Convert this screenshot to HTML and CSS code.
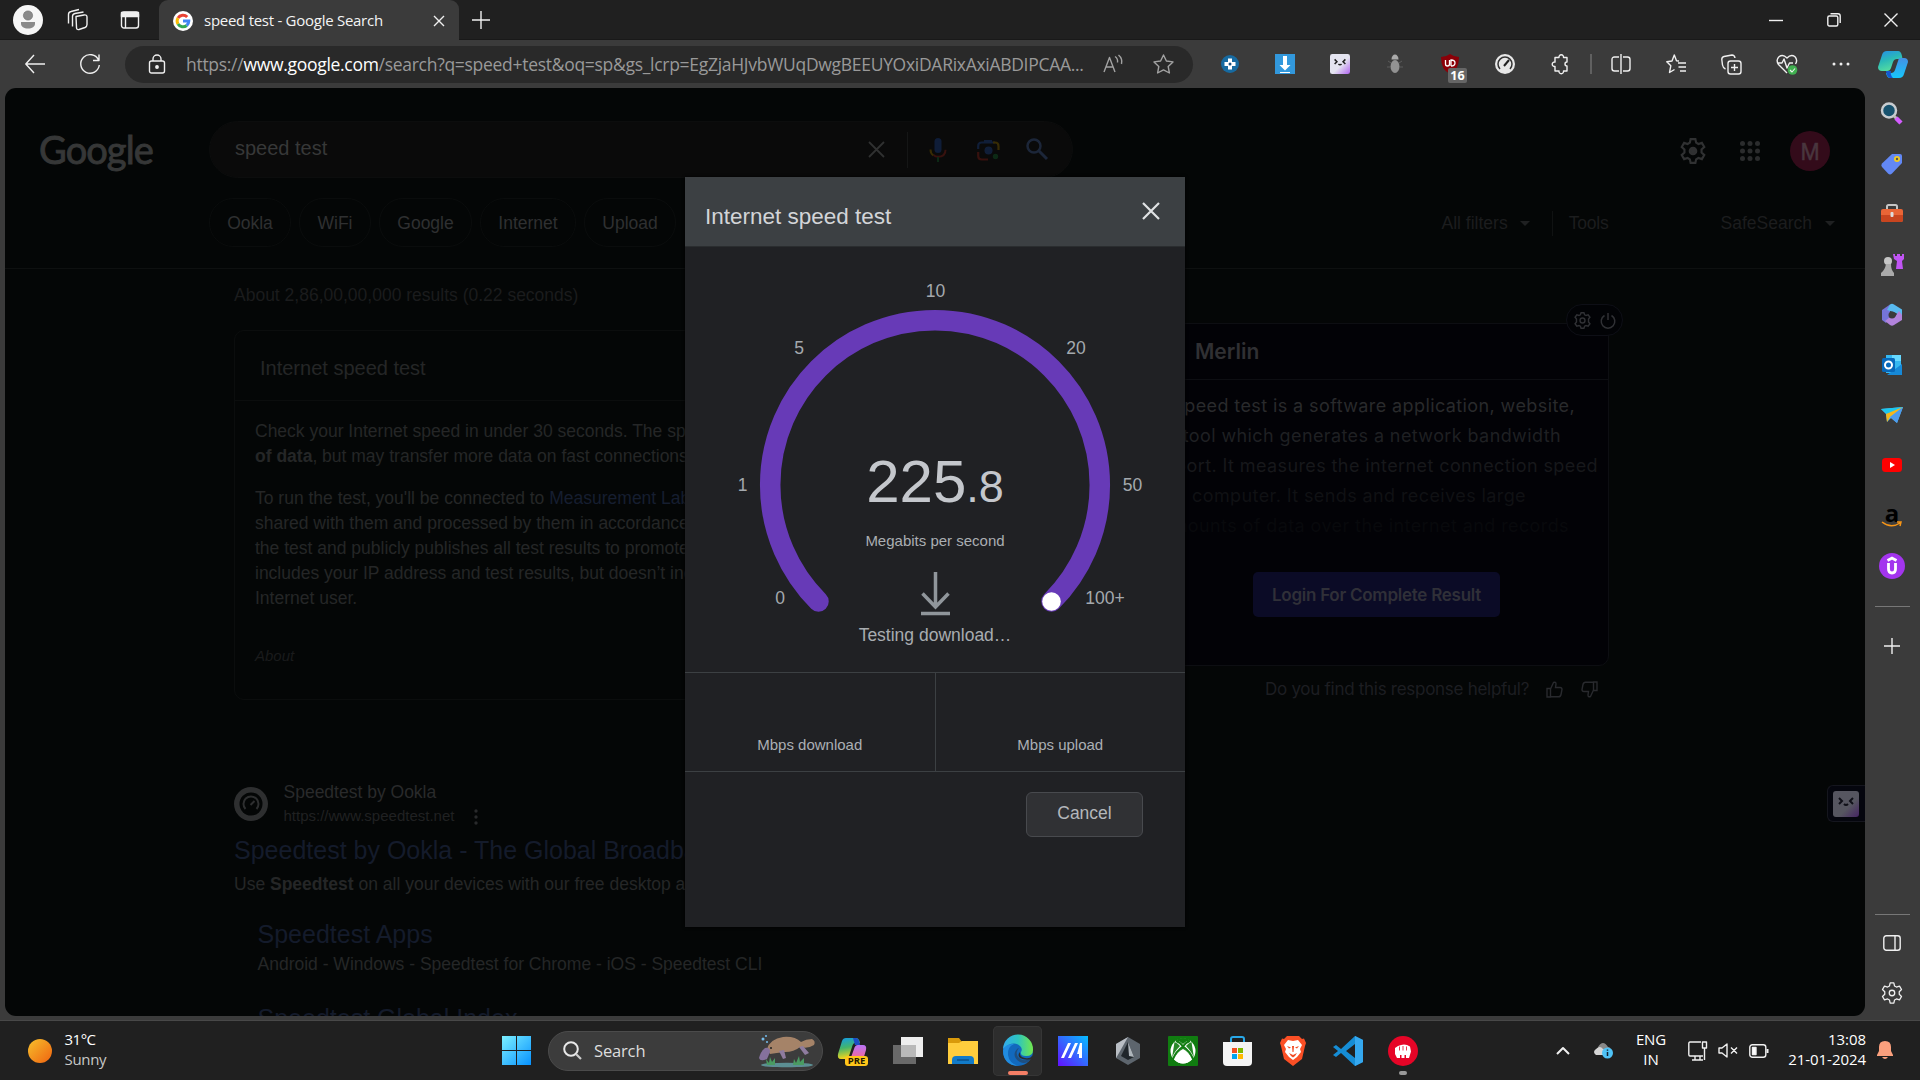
FILE: index.html
```html
<!DOCTYPE html>
<html lang="en">
<head>
<meta charset="utf-8">
<title>speed test - Google Search</title>
<link rel="stylesheet" href="styles.css">
</head>
<body>
<div class="desktop">
  <header class="titlebar">
    <div class="title-icons">
      <svg width="30" height="30" viewBox="0 0 30 30"><circle cx="15" cy="15" r="15" fill="#f6f6f6"/><circle cx="15" cy="10.5" r="4.6" fill="#8a8a8a" stroke="#666" stroke-width=".6"/><path d="M8 17h14v1.500c0 3.500-3 5-7 5s-7-1.500-7-5z" fill="#8a8a8a"/></svg>
      <svg class="line" width="24" height="24" viewBox="0 0 24 24"><path d="M10 8.500l8-1.500q3-.5 3 2v7.500q0 2-2 3l-6 2q-2.500.5-2.500-2zM6.500 18.500V8.500q0-2.500 2.500-3L17.500 4M2.500 15.500V6.500q0-2.500 2.500-3l8-2"/></svg>
      <svg class="line" width="20" height="20" viewBox="0 0 20 20"><rect x="1.500" y="2" width="17" height="16" rx="2.500"/><path d="M1.500 2.500h17v4h-17z" fill="#f0f0f0"/><path d="M5.500 6v12"/></svg>
    </div>
    <div class="tab">
      <svg width="20" height="20" viewBox="0 0 20 20"><circle cx="10" cy="10" r="10" fill="#fff"/><g fill="none" stroke-width="3"><path d="M14.200 6A5.800 5.800 0 0 0 5 7" stroke="#ea4335"/><path d="M5 7a5.800 5.800 0 0 0 0 6" stroke="#fbbc05"/><path d="M5 13a5.800 5.800 0 0 0 8.700 1.500" stroke="#34a853"/><path d="M13.700 14.500A5.800 5.800 0 0 0 15.800 10H10" stroke="#4285f4"/></g></svg>
      <span class="tab-title">speed test - Google Search</span>
      <svg class="line" width="12" height="12" viewBox="0 0 12 12"><path d="M1 1l10 10M11 1L1 11"/></svg>
    </div>
    <svg class="line new-tab" width="18" height="18" viewBox="0 0 18 18"><path d="M9 0v18M0 9h18"/></svg>
    <div class="window-controls">
      <svg class="line" width="14" height="14" viewBox="0 0 14 14"><path d="M0 7.500h14"/></svg>
      <svg class="line" width="14" height="14" viewBox="0 0 14 14"><rect x=".8" y="3" width="10" height="10" rx="1.500"/><path d="M3.500.8H11q2.200 0 2.200 2.200v7"/></svg>
      <svg class="line" width="14" height="14" viewBox="0 0 14 14"><path d="M.5.5l13 13M13.500.5l-13 13"/></svg>
    </div>
  </header>

  <nav class="toolbar">
    <div class="nav-buttons">
      <svg class="line" width="20" height="20" viewBox="0 0 20 20"><path d="M9 1L.8 10 9 19M1 10h19"/></svg>
      <svg class="line" width="22" height="22" viewBox="0 0 22 22"><path d="M19.500 7A9.300 9.300 0 1 0 20.300 12M20 1.500v6h-6"/></svg>
    </div>
    <div class="address">
      <svg class="line lock" width="18" height="20" viewBox="0 0 18 20"><rect x="1.500" y="7" width="15" height="12" rx="2"/><path d="M5 7V5a4 4 0 0 1 8 0v2"/><circle cx="9" cy="13" r="1.200" fill="#eee"/></svg>
      <span class="url">https://<b>www.google.com</b>/search?q=speed+test&amp;oq=sp&amp;gs_lcrp=EgZjaHJvbWUqDwgBEEUYOxiDARixAxiABDIPCAA...</span>
      <svg class="line muted" width="20" height="18" viewBox="0 0 20 18"><path d="M1 17L6.500 2.500 12 17M3 12h7M12 1.500a6 6 0 0 1 2.500 6M15.500 0A9 9 0 0 1 18.500 9"/></svg>
      <svg class="line muted star" width="21" height="20" viewBox="0 0 21 20"><path d="M10.500 1l2.900 6 6.600.9-4.800 4.600 1.200 6.500-5.900-3.100L4.600 19l1.200-6.500L1 7.900 7.600 7z"/></svg>
    </div>
    <div class="tools">
      <span><svg width="18" height="18" viewBox="0 0 18 18"><circle cx="9" cy="9" r="9" fill="#176aa0"/><path d="M7 3.500h4V7h3.500v4H11v3.500H7V11H3.500V7H7z" fill="#fff"/><circle cx="9" cy="9" r="1.500" fill="#174f80"/></svg></span>
      <span><svg width="20" height="20" viewBox="0 0 20 20"><path d="M0 0h20v20H0z" fill="#3298dc"/><path d="M8 2h4v9h3.500L10 16.500 4.500 11H8zM5 18h10v1H5z" fill="#fff"/></svg></span>
      <span><svg width="20" height="20" viewBox="0 0 26 26"><defs><linearGradient id="mer" x1="0" y1="0" x2="1" y2="1"><stop offset=".55" stop-color="#e4e4f0"/><stop offset="1" stop-color="#b064f0"/></linearGradient></defs><rect width="26" height="26" rx="3" fill="url(#mer)"/><path d="M6 7l3 3-3 3M20 7l-3 3 3 3M11 13q2 2 4 0" fill="none" stroke="#222" stroke-width="2"/></svg></span>
      <span><svg width="16" height="20" viewBox="0 0 16 20"><path d="M4.500 5.500a3.500 5 0 0 1 7 0z" fill="#aaa"/><ellipse cx="8" cy="12.500" rx="4.500" ry="6.500" fill="#929292"/><path d="M1 7l3 2M15 7l-3 2M0 13h3M16 13h-3" stroke="#5c5c5c"/></svg></span>
      <span class="badged"><svg width="18" height="20" viewBox="0 0 18 20"><path d="M9 0q4 3 9 3 0 13-9 17Q0 16 0 3q5 0 9-3z" fill="#8b0008"/><path d="M4.500 6v4q0 2 2 2t2-2V6M10 12V6q4 0 4 3t-4 3" fill="none" stroke="#fff" stroke-width="1.300"/></svg><i class="badge">16</i></span>
      <span><svg width="20" height="20" viewBox="0 0 20 20"><circle cx="10" cy="10" r="10" fill="#e8e8e8"/><path d="M5 15a7 7 0 1 1 10 0" fill="none" stroke="#333" stroke-width="1.500"/><path d="M9 12l5-6" stroke="#222" stroke-width="2"/></svg></span>
      <span><svg class="line" width="20" height="20" viewBox="0 0 20 20"><path d="M5 3.500h4a2.300 2.300 0 1 1 4.500 0h3.500v4.500a2 2 0 1 0 0 4V17h-3.500a2.300 2.300 0 1 1-4.500 0H5v-4.500a2.300 2.300 0 1 1 0-4.500z"/></svg></span>
    </div>
    <div class="tools browser-tools">
      <span class="split"><svg class="line" width="20" height="20" viewBox="0 0 20 20"><path d="M8 3H3.500Q1 3 1 5.500v9Q1 17 3.500 17H8M12 3h4.500Q19 3 19 5.500v9q0 2.500-2.500 2.500H12M10 0v20"/></svg></span>
      <span><svg class="line" width="21" height="20" viewBox="0 0 21 20"><path d="M13 7L10.500 6.800 8.300 1 6 7 0.800 7.800l4 4L3.500 18.500l5-3M12 9h8M12.500 13H20M14 17h6"/></svg></span>
      <span><svg class="line" width="21" height="21" viewBox="0 0 21 21"><rect x="7" y="7" width="13" height="13" rx="2.500"/><path d="M13.500 10v7M10 13.500h7M4.500 15Q2 14 1.500 11L.8 5.500Q.8 3 3 2.500L11 1q2.500 0 3 3"/></svg></span>
      <span><svg class="line" width="22" height="21" viewBox="0 0 22 21"><path d="M11 19L2.500 10.500Q-.5 6 3 2.700q4-3 8 1.300 4-4.300 8-1.300 3 3.300.5 7.300M1 9h5l2-4 3 9 2.500-5H17"/><circle cx="16.500" cy="16" r="4.800" fill="#40b050" stroke="none"/><path d="M14 16l2 2 3-3.500" stroke-width="1.100"/></svg></span>
      <span class="menu"><svg width="18" height="4" viewBox="0 0 18 4"><g fill="#eee"><circle cx="2" cy="2" r="1.500"/><circle cx="9" cy="2" r="1.500"/><circle cx="16" cy="2" r="1.500"/></g></svg></span>
      <span class="assistant"><svg width="30" height="27" viewBox="0 0 30 27"><defs><linearGradient id="cpA" x1="0" y1="0" x2=".4" y2="1"><stop stop-color="#268de9"/><stop offset=".5" stop-color="#2ab8b8"/><stop offset="1" stop-color="#55dda0"/></linearGradient><linearGradient id="cpB" x1="0" y1="0" x2="0" y2="1"><stop stop-color="#4490e5"/><stop offset="1" stop-color="#16c7fb"/></linearGradient></defs><path d="M9 0h11q3 0 4 5l.5 3H19q-3 0-4 3l-2 6q-1 3-4 3H4q-4 0-4-4L4 4q1-4 5-4z" fill="url(#cpA)"/><path d="M21 7h5q4 0 4 4l-4 12q-1 4-5 4H12q-3 0-4-5h5q3 0 4-3z" fill="url(#cpB)"/><path d="M8 20h5q-1 4 2 7h-3q-3 0-4-7z" fill="#1558d0"/></svg></span>
    </div>
  </nav>

  <div class="browser-body">
    <main class="page">
      <div class="page-head">
        <div class="head-row">
          <div class="logo">Google</div>
          <div class="search">
            <span class="query">speed test</span>
            <svg width="17" height="17" viewBox="0 0 17 17"><path d="M1 1l15 15M16 1L1 16" stroke="#303131" stroke-width="1.800"/></svg>
            <i class="search-sep"></i>
            <svg width="18" height="24" viewBox="0 0 18 24"><rect x="5.500" width="7" height="15" rx="3.500" fill="#0f1d38"/><path d="M1.500 11.500q0 4 3 6" stroke="#382c04" stroke-width="2" fill="none"/><path d="M4.500 17q2 1.800 4.500 1.800 7.500 0 7.500-7" stroke="#37110e" stroke-width="2" fill="none"/><path d="M9 19v5" stroke="#0c2915" stroke-width="2"/></svg>
            <svg class="lens" width="23" height="22" viewBox="0 0 23 22"><g fill="none" stroke-width="2.200"><path d="M1.200 10V7q0-3.500 3.500-3.500H18" stroke="#101e38"/><path d="M7 2.500h8" stroke="#101e38" stroke-width="3"/><path d="M16 3.500h2q3.500 0 3.500 3.500v4" stroke="#382c04"/><path d="M1.200 13v4q0 3.500 3.500 3.500H11" stroke="#37110e"/></g><circle cx="11.500" cy="11.500" r="4" fill="#101e38"/><circle cx="18.500" cy="17.500" r="2.700" fill="#0c2915"/></svg>
            <svg class="find" width="22" height="22" viewBox="0 0 22 22"><circle cx="8" cy="8" r="6.500" fill="none" stroke="#1c2639" stroke-width="2.500"/><path d="M13 13l8 8" stroke="#1c2639" stroke-width="3"/></svg>
          </div>
          <div class="account">
            <svg width="26" height="26" viewBox="0 0 24 24" fill="none" stroke="#303132" stroke-width="2"><path d="M9.800 1h4.400l.7 3.300 2.100 1.200 3.200-1 2.200 3.800-2.500 2.300v2.800l2.500 2.300-2.200 3.800-3.200-1-2.100 1.200-.7 3.300H9.800l-.7-3.300L7 18.500l-3.200 1-2.200-3.800 2.500-2.300v-2.800L1.600 8.300l2.200-3.800 3.200 1 2.100-1.200z"/><circle cx="12" cy="12" r="3" fill="#303132"/></svg>
            <svg width="20" height="20" viewBox="0 0 20 20" fill="#2b2c2d"><circle cx="2.500" cy="2.500" r="2.500"/><circle cx="10" cy="2.500" r="2.500"/><circle cx="17.500" cy="2.500" r="2.500"/><circle cx="2.500" cy="10" r="2.500"/><circle cx="10" cy="10" r="2.500"/><circle cx="17.500" cy="10" r="2.500"/><circle cx="2.500" cy="17.500" r="2.500"/><circle cx="10" cy="17.500" r="2.500"/><circle cx="17.500" cy="17.500" r="2.500"/></svg>
            <span class="avatar">M</span>
          </div>
        </div>
        <div class="chip-row">
          <span class="chip chip-ookla">Ookla</span><span class="chip chip-wifi">WiFi</span><span class="chip chip-google">Google</span><span class="chip chip-internet">Internet</span><span class="chip chip-upload">Upload</span>
          <div class="filters"><span>All filters</span><i class="caret"></i><span class="filter-tools">Tools</span><span class="safe">SafeSearch</span><i class="caret"></i></div>
        </div>
      </div>
      <div class="columns">
        <section class="results">
          <p class="stats">About 2,86,00,00,000 results (0.22 seconds)</p>
          <article class="card">
            <h2>Internet speed test</h2>
            <div class="card-body">
              <p>Check your Internet speed in under 30 seconds. The speed<br><b>of data</b>, but may transfer more data on fast connections.</p>
              <p>To run the test, you'll be connected to <a>Measurement Lab</a><br>shared with them and processed by them in accordance<br>the test and publicly publishes all test results to promote<br>includes your IP address and test results, but doesn’t include<br>Internet user.</p>
              <em>About</em>
            </div>
          </article>
          <article class="result">
            <div class="site">
              <svg width="34" height="34" viewBox="0 0 34 34"><circle cx="17" cy="17" r="17" fill="#2e2f30"/><circle cx="17" cy="17" r="11.500" fill="#040606"/><path d="M11.500 22a7.500 7.500 0 1 1 11 0" fill="none" stroke="#2e2f30" stroke-width="2"/><path d="M16.500 18l4-4" stroke="#2e2f30" stroke-width="2"/></svg>
              <div class="site-text"><span>Speedtest by Ookla</span><small>https://www.speedtest.net</small></div>
              <svg class="more" width="4" height="16" viewBox="0 0 4 16" fill="#292a2b"><circle cx="2" cy="2" r="1.700"/><circle cx="2" cy="8" r="1.700"/><circle cx="2" cy="14" r="1.700"/></svg>
            </div>
            <h3>Speedtest by Ookla - The Global Broadband</h3>
            <p>Use <b>Speedtest</b> on all your devices with our free desktop and</p>
            <div class="sublinks"><h3>Speedtest Apps</h3><p>Android - Windows - Speedtest for Chrome - iOS - Speedtest CLI</p><h3 class="next">Speedtest Global Index</h3></div>
          </article>
        </section>
        <aside class="merlin">
          <div class="merlin-card">
            <h4>Merlin</h4>
            <div class="answer">
              <p class="a1">speed test is a software application, website,</p>
              <p class="a2">tool which generates a network bandwidth</p>
              <p class="a3">report. It measures the internet connection speed</p>
              <p class="a4">a computer. It sends and receives large</p>
              <p class="a5">amounts of data over the internet and records</p>
            </div>
            <div class="login">Login For Complete Result</div>
            <div class="pill">
              <svg width="17" height="17" viewBox="0 0 24 24" fill="none" stroke="#303135" stroke-width="2"><path d="M10 1h4l1 3 2 1 3-1 2.500 3.500-2 2.500v4l2 2.500L20 20l-3-1-2 1-1 3h-4l-1-3-2-1-3 1-2.500-3.500 2-2.500v-4l-2-2.500L4 4l3 1 2-1z"/><circle cx="12" cy="12" r="3.500"/></svg>
              <svg width="16" height="17" viewBox="0 0 16 17" fill="none" stroke="#303135" stroke-width="1.500"><path d="M8 1v7M4.500 3.500a6.800 6.800 0 1 0 7 0"/></svg>
            </div>
          </div>
          <div class="helpful"><span>Do you find this response helpful?</span>
            <svg width="17" height="17" viewBox="0 0 17 17"><path d="M1 7.500h3.500V16H1zM4.500 8l3-6.500q2.500-1 2.500 1.500l-.5 3.500H14q2 0 2 2l-1 5q-.5 2.300-2.500 2.300h-8"/></svg>
            <svg class="down" width="17" height="17" viewBox="0 0 17 17"><path d="M1 7.500h3.500V16H1zM4.500 8l3-6.500q2.500-1 2.500 1.500l-.5 3.500H14q2 0 2 2l-1 5q-.5 2.300-2.500 2.300h-8"/></svg>
          </div>
        </aside>
      </div>
      <div class="side-tab"><svg width="26" height="26" viewBox="0 0 26 26"><defs><linearGradient id="merDim" x1="0" y1="0" x2="1" y2="1"><stop offset=".6" stop-color="#565660"/><stop offset="1" stop-color="#452463"/></linearGradient></defs><rect width="26" height="26" rx="3" fill="url(#merDim)"/><path d="M6 7l3 3-3 3M20 7l-3 3 3 3M11 13q2 2 4 0" fill="none" stroke="#101018" stroke-width="2"/></svg></div>

      <section class="dialog">
        <div class="dialog-head"><h1>Internet speed test</h1><svg width="18" height="18" viewBox="0 0 18 18"><path d="M1 1l16 16M17 1L1 17" stroke="#e0e2e4" stroke-width="2.200"/></svg></div>
        <div class="meter">
          <svg class="gauge" width="500" height="425" viewBox="685 247 500 425"><path d="M818.500 601.500A164.800 164.800 0 1 1 1051.500 601.500" fill="none" stroke="#673ab7" stroke-width="20.500" stroke-linecap="round"/><circle cx="1051.500" cy="601.500" r="9.300" fill="#fff"/>
            <g class="ticks"><text x="935.500" y="297">10</text><text x="799" y="354">5</text><text x="1076" y="354">20</text><text x="742.500" y="490.500">1</text><text x="1132.500" y="490.500">50</text><text x="780" y="604">0</text><text x="1105" y="604">100+</text></g>
            <path d="M935.500 572v34M922.500 593.500l13 13.500 13-13.500M921 613.500h29" fill="none" stroke="#90969b" stroke-width="3.500"/></svg>
          <div class="reading"><div class="speed">225<small>.8</small></div><div class="unit">Megabits per second</div><div class="phase">Testing download…</div></div>
        </div>
        <div class="totals"><span>Mbps download</span><span>Mbps upload</span></div>
        <div class="actions"><span class="cancel">Cancel</span></div>
      </section>
    </main>

    <aside class="sidebar">
      <div class="apps">
        <span><svg width="24" height="24" viewBox="0 0 24 24"><circle cx="9" cy="8.500" r="7" fill="#17526e" stroke="#c8ccd0" stroke-width="2.500"/><path d="M14 14l3 3" stroke="#bbb" stroke-width="3"/><path d="M16 16l5 5" stroke="#d45cff" stroke-width="4.500"/></svg></span>
        <span><svg width="24" height="24" viewBox="0 0 24 24"><path d="M12 2h8q2 0 2 2v7L12 21.500q-2 2-4 0L2 15q-1.500-2 0-3.500z" fill="#6288f5"/><circle cx="17" cy="7" r="3" fill="#f2cc22"/><circle cx="17" cy="7" r="1.200" fill="#555"/></svg></span>
        <span><svg width="24" height="24" viewBox="0 0 24 24"><path d="M7 7V4.500Q7 3 8.500 3h7Q17 3 17 4.500V7" fill="none" stroke="#c5c5c5" stroke-width="2"/><rect x="1" y="7" width="22" height="13" rx="2" fill="#e96536"/><path d="M1 13h22v5q0 2-2 2H3q-2 0-2-2z" fill="#c8451f"/><rect x="10.500" y="10" width="3" height="5" rx="1" fill="#ddd"/></svg></span>
        <span><svg width="24" height="24" viewBox="0 0 24 24"><path d="M13 1h2v2h2V1h3v2h2V1h2v5l-2 2 1 8h-7l1-8-3-2z" fill="#c155f4"/><circle cx="8" cy="8" r="4" fill="#c5c5c5"/><path d="M6 11h5q0 6 3 9v3H1v-3q4-3 5-9z" fill="#aaa"/></svg></span>
        <span><svg width="24" height="24" viewBox="0 0 24 24"><path d="M2 7L10 1.500V15l-4 5-4-3z" fill="#7574d9"/><path d="M10 1.500q2-1.500 4 0l8 5v7L15 9.500 7 7z" fill="#58b9ef"/><path d="M22 12v5l-8 5q-2 1.500-4 0l-5-4 5-4h5l4-6z" fill="#b283dc"/><circle cx="12" cy="12" r="3.500" fill="#3b3b3b"/></svg></span>
        <span><svg width="24" height="24" viewBox="0 0 24 24"><path d="M6 2h15v18H6z" fill="#35b8f1"/><path d="M12 2h9v6h-9z" fill="#66d9ff"/><path d="M22 11v11H7z" fill="#1689d8"/><rect x="2" y="5" width="13" height="14" rx="1.500" fill="#0868ba"/><circle cx="8.500" cy="12" r="3.500" fill="none" stroke="#fff" stroke-width="2"/></svg></span>
        <span><svg width="24" height="24" viewBox="0 0 24 24"><path d="M1 6l22-2-6 16-6-5-4 4-1-8z" fill="#51b9f2"/><path d="M1 6l22-2L8 12z" fill="#1cc7ee"/><path d="M23 4L6 11l1 8 3-5z" fill="#f6b719"/><path d="M23 4L10 14l7 6z" fill="#4d9bed"/></svg></span>
        <span><svg width="22" height="24" viewBox="0 0 22 24"><rect x="1" y="5" width="20" height="14" rx="3.500" fill="#f00"/><path d="M9 9l5 3-5 3z" fill="#fff"/></svg></span>
        <span class="amazon">a<svg width="22" height="7" viewBox="0 0 22 7"><path d="M1 1q9 7 18 1M16 1l4 0-1 4" fill="none" stroke="#f79516" stroke-width="1.500"/></svg></span>
        <span><svg width="26" height="26" viewBox="0 0 26 26"><circle cx="13" cy="13" r="13" fill="#a335ee"/><path d="M8.500 7.500L13 5l4.500 2.500M9.500 10v6q0 4 3.500 4t3.500-4v-6" fill="none" stroke="#fff" stroke-width="2.800"/></svg></span>
      </div>
      <i class="rule"></i>
      <svg class="line add" width="16" height="16" viewBox="0 0 16 16"><path d="M8 0v16M0 8h16"/></svg>
      <i class="rule low"></i>
      <svg class="line panel" width="18" height="16" viewBox="0 0 18 16"><rect x=".8" y=".8" width="16.400" height="14.400" rx="2.500"/><path d="M12 1v14"/></svg>
      <svg class="line gear" width="22" height="22" viewBox="0 0 24 24"><path d="M10 1h4l.8 3.400 2 1.100 3.400-1 2.200 3.700-2.500 2.500v2.600l2.500 2.500-2.200 3.700-3.400-1-2 1.100L14 23h-4l-.8-3.400-2-1.100-3.400 1-2.200-3.700 2.500-2.500v-2.600L1.600 8.200l2.200-3.700 3.400 1 2-1.100z"/><circle cx="12" cy="12" r="3"/></svg>
    </aside>
  </div>

  <footer class="taskbar">
    <div class="weather"><i class="sun"></i><div><b>31°C</b><span>Sunny</span></div></div>
    <svg class="start" width="29" height="29" viewBox="0 0 29 29"><defs><linearGradient id="win" x1="0" y1="0" x2="1" y2="1"><stop stop-color="#7cf0ff"/><stop offset="1" stop-color="#0792ff"/></linearGradient></defs><path d="M0 0h14v14H0zM15 0h14v14H15zM0 15h14v14H0zM15 15h14v14H15z" fill="url(#win)"/></svg>
    <div class="task-search">
      <svg width="19" height="19" viewBox="0 0 19 19"><circle cx="8" cy="8" r="6.800" fill="none" stroke="#e8e8e8" stroke-width="2"/><path d="M13 13l5 5" stroke="#ccc" stroke-width="2.200"/></svg>
      <span>Search</span>
      <svg width="56" height="34" viewBox="0 0 56 34"><ellipse cx="28" cy="31" rx="26" ry="2.300" fill="#5c8f93"/><path d="M8 31l-1-6 3 4 1-6 2 5 3-4 0 7zM34 31l1-6 2 4 3-7 1 6 4-4 0 7z" fill="#4a9b62"/><path d="M8 15q3-10 16-12 12-1 18 5 5-3 11-3 4 2 2 6-6 4-14 2-6 5-15 5-9 1-15 2z" fill="#a58368"/><path d="M6 14q5-1 5 4l-3 7q-7 3-8-1 2-7 6-10z" fill="#85719d"/><path d="M20 17l4 8 3-1-2-8zM40 13l6 8 4-2-6-7z" fill="#8f7c9f"/><circle cx="12" cy="14" r="1" fill="#222"/><g fill="#74bcec"><circle cx="4" cy="5" r="1.500"/><circle cx="7" cy="2" r="1"/><circle cx="8" cy="8" r="1"/></g></svg>
    </div>
    <div class="task-apps">
      <span class="copilot"><svg width="30" height="30" viewBox="0 0 30 30"><defs><linearGradient id="cpC" x1="0" y1="0" x2=".2" y2="1"><stop stop-color="#119bea"/><stop offset=".5" stop-color="#43b56c"/><stop offset="1" stop-color="#f2d51c"/></linearGradient><linearGradient id="cpD" x1="0" y1="0" x2="0" y2="1"><stop stop-color="#b873f7"/><stop offset="1" stop-color="#fb668e"/></linearGradient></defs><path d="M8 2h10q3 0 4 5h-5q-2 0-3 4l-3 9q-1 3-4 3H3q-4 0-3-5L4 5q1-3 4-3z" fill="url(#cpC)"/><path d="M18 2q3 0 4 7h-5l-2-7z" fill="#1c4dc5"/><path d="M20 9h5q4 0 3 5l-3 10H12l4-11q1-4 4-4z" fill="url(#cpD)"/></svg><i class="pre">PRE</i></span>
      <span><svg width="30" height="30" viewBox="0 0 30 30"><path d="M8 1h22v20H8z" fill="#eee"/><path d="M0 9h23v19H0z" fill="#777" fill-opacity=".85"/><path d="M8 9h15v12H8z" fill="#b9b9b9"/></svg></span>
      <span><svg width="30" height="30" viewBox="0 0 30 30"><path d="M0 2h11l3 4v4H0z" fill="#d99a0b"/><path d="M0 7h11l3-2h16v23H0z" fill="#ffcd3d"/><path d="M4 28v-4q0-4 4-4h14q4 0 4 4v4z" fill="#127bc9"/><path d="M9 24h12" stroke="#0b518b" stroke-width="1.500"/></svg></span>
      <span class="active"><svg width="30" height="30" viewBox="0 0 30 30"><defs><linearGradient id="edA"><stop stop-color="#32a9ed"/><stop offset=".5" stop-color="#2dc5bf"/><stop offset="1" stop-color="#72e84c"/></linearGradient></defs><circle cx="15" cy="15" r="15" fill="#1269bd"/><path d="M0 13A15 15 0 0 1 30 14q0 6-7 6-6 0-5-4 2-3-1-6-7-6-17 3z" fill="url(#edA)"/><path d="M0 14q3-7 11-6-7 3-6 11 1 8 10 11Q0 29 0 14z" fill="#218ce0"/><path d="M16 12q-4 4-1 9 4 5 13 2-5 6-11 3-7-4-5-10 1-3 4-4z" fill="#1f4f80"/><path d="M17 16q-1 5 5 6 5 1 7-2l1 3q-8 2-13-1-3-3 0-6z" fill="#2d2d2d"/></svg></span>
      <span><svg width="30" height="30" viewBox="0 0 30 30"><defs><linearGradient id="ma" x1="0" y1="1" x2="1" y2="0"><stop stop-color="#6210ff"/><stop offset=".5" stop-color="#3467ff"/><stop offset="1" stop-color="#05bfff"/></linearGradient></defs><path d="M0 0h30v30H0z" fill="url(#ma)"/><path d="M3 22L10 7h3L6 22zM10 22l7-15h3l-7 15zM18 22l4-15h2v15h-3v-4h-2z" fill="#fff"/></svg></span>
      <span><svg width="28" height="30" viewBox="0 0 28 30"><path d="M14 1l12 7v14l-12 7-12-7V8z" fill="#5d656d"/><path d="M14 1L5 17l-3 5V8z" fill="#b9bec4"/><path d="M14 6l6 15-6 3-7-4z" fill="#20262b"/><path d="M14 6l6 15-5-1z" fill="#aeb5bb"/></svg></span>
      <span><svg width="30" height="30" viewBox="0 0 30 30"><rect width="30" height="30" rx="1" fill="#107c10"/><circle cx="15" cy="15" r="12.500" fill="#fff"/><path d="M7 5q4-1 8 3 4-4 8-3-3-3-8-3T7 5z" fill="#107c10"/><path d="M5 25Q8 16 15 11q7 5 10 14-4-7-10-10Q9 18 5 25zM6.500 6q3 1 5.500 4Q6 16 4 22M23.500 6q-3 1-5.500 4 6 6 8 12" fill="#107c10" fill-opacity=".9"/><path d="M6 23q3-7 9-10 6 3 9 10-4 4.500-9 4.500T6 23z" fill="#fff"/><path d="M4.500 24Q8 15 15 10.500 22 15 25.500 24M8 5q4 1 7 5.500Q18 6 22 5" fill="none" stroke="#107c10" stroke-width="2"/></svg></span>
      <span><svg width="29" height="30" viewBox="0 0 29 30"><path d="M8 8V3q0-2 2-2h9q2 0 2 2v5" fill="none" stroke="#28a8e8" stroke-width="2"/><path d="M0 6h29v20q0 4-4 4H4q-4 0-4-4z" fill="#f4f4f4"/><path d="M9 12h5v5H9z" fill="#f25022"/><path d="M15 12h5v5h-5z" fill="#7fba00"/><path d="M9 18h5v5H9z" fill="#00a4ef"/><path d="M15 18h5v5h-5z" fill="#ffb900"/></svg></span>
      <span><svg width="26" height="30" viewBox="0 0 26 30"><path d="M7 0h12l3 3 2-.5L26 7l-1 3-3 13-9 7-9-7L1 10 0 7l2-4.500L4 3z" fill="#fb4f25"/><path d="M8 4l5 1 5-1 4 5-2 4 1 3-4 5-4 3-4-3-4-5 1-3-2-4z" fill="#fff"/><path d="M7 10l4 1.500-2 1zM19 10l-4 1.500 2 1zM9 17l4 2 4-2-2 3-2 1.500L11 20zM12 10h2l-.5 6h-1z" fill="#f14b24"/></svg></span>
      <span><svg width="30" height="30" viewBox="0 0 30 30"><path d="M22 0l8 4v22l-8 4L8 17l-5 4-3-2 5-4-5-4 3-2 5 4zM22 8l-9 7 9 7z" fill="#168dd5" fill-rule="evenodd"/><path d="M22 0l8 4v22l-8 4z" fill="#35a8ef"/></svg></span>
      <span class="running"><svg width="30" height="30" viewBox="0 0 30 30"><circle cx="15" cy="15" r="15" fill="#e60527"/><path d="M7 12l3-2 3-1 3-.5 3 .5 3 1.500 1 5-2 6.500h-3v-3h-1.500v3h-3v-3H12v3H9L7 18z" fill="#fff"/><path d="M11.500 10.500v4M15 10v4.500M18.500 10.500v4" stroke="#e60527" stroke-width=".8"/></svg></span>
    </div>
    <div class="tray">
      <svg class="line chev" width="14" height="9" viewBox="0 0 14 9"><path d="M1 8l6-6 6 6" stroke-width="2"/></svg>
      <svg class="cloud" width="20" height="17" viewBox="0 0 20 17"><path d="M5 5q5-8 10 0 3 0 3 5H6z" fill="#888"/><path d="M3 13q-4-3 0-6 4-4 7 0 3 0 3 6z" fill="#d5d5d5"/><circle cx="14.500" cy="11" r="5.500" fill="#4fc3f7"/><path d="M14.500 10v4M14.500 7.500v1.300" stroke="#123" stroke-width="1.500"/></svg>
      <div class="lang">ENG<br>IN</div>
      <svg class="line" width="20" height="20" viewBox="0 0 20 20"><path d="M13 1H2Q.8 1 .8 2.500v11Q.8 15 2 15h13M4 19h11M7 15v4M12 15v4M14.500 1h4v6h-4zM16.500 7v12"/></svg>
      <svg class="line mute" width="20" height="15" viewBox="0 0 20 15"><path d="M1 5h3l5-4v13l-5-4H1zM13 4.500l6 6M19 4.500l-6 6"/></svg>
      <svg class="line batt" width="20" height="14" viewBox="0 0 20 14"><rect x=".8" y=".8" width="16" height="12.400" rx="2.500"/><path d="M3.500 3.500h3.500v7H3.500z" fill="#fff"/><path d="M18.500 5v4" stroke-width="2"/></svg>
      <div class="clock">13:08<br>21-01-2024</div>
      <svg class="bell" width="16" height="19" viewBox="0 0 16 19"><path d="M8 0q6 0 6 6v4l2 4v1H0v-1l2-4V6q0-6 6-6zM5 16h6q-3 4-6 0z" fill="#fba07d"/></svg>
    </div>
  </footer>
</div>
</body>
</html>
```
FILE: styles.css
```css
* { box-sizing: border-box; }
body { margin: 0; background: #202020; }
h1, h2, h3, h4, p { margin: 0; font-weight: 400; }
svg { display: block; flex: none; overflow: visible; }
i, em { font-style: normal; }

.desktop {
  width: 1920px; height: 1080px; overflow: hidden;
  display: flex; flex-direction: column;
  background: #3b3b3b;
  font-family: "Open Sans", "Noto Sans", sans-serif;
}
.line { fill: none; stroke: #f0f0f0; stroke-width: 1.4; stroke-linejoin: round; }
.muted { stroke: #a2a2a2; }

/* Window chrome */
.titlebar { height: 40px; flex: none; background: #202020; border-bottom: 1px solid #191919; display: flex; align-items: center; }
.title-icons { width: 159px; padding-left: 13px; display: flex; align-items: center; }
.title-icons svg:nth-child(2) { margin-left: 23px; }
.title-icons svg:nth-child(3) { margin-left: 30px; }
.tab { width: 300px; height: 41px; align-self: flex-start; padding: 0 14px; background: #3b3b3b; border-radius: 9px 9px 0 0; display: flex; align-items: center; }
.tab-title { flex: 1; margin-left: 11px; padding-bottom: 2px; color: #f4f4f4; font-size: 15px; letter-spacing: -.27px; white-space: nowrap; }
.new-tab { margin-left: 13px; }
.window-controls { margin-left: auto; padding-right: 22px; display: flex; gap: 43.500px; }

.toolbar { height: 48px; flex: none; display: flex; align-items: center; }
.nav-buttons { width: 125px; padding-left: 25px; display: flex; align-items: center; gap: 34px; }
.address { width: 1068px; height: 37px; padding: 0 19px 0 23px; border-radius: 19px; background: #292929; display: flex; align-items: center; }
.url { width: 917px; flex: none; margin-left: 20px; padding-bottom: 1px; color: #999; font-size: 17.500px; letter-spacing: -.29px; white-space: nowrap; }
.url b { color: #fff; font-weight: 400; }
.star { margin-left: auto; }
.tools { display: flex; margin-left: 9px; }
.tools span { width: 55px; height: 30px; display: flex; align-items: center; justify-content: center; position: relative; }
.browser-tools { margin-left: 4px; }
.browser-tools::before { content: ""; width: 2px; height: 20px; margin: 5px 0 0 -1px; background: #606060; }
.tools .split { width: 57px; }
.tools .menu { width: 54px; }
.tools .assistant { width: 50px; }
.badge { position: absolute; left: 26px; top: 19px; width: 19px; height: 15px; background: #666; border-radius: 2px; color: #fff; font: 700 12.500px/15px "Open Sans", sans-serif; text-align: center; }

.browser-body { height: 933px; flex: none; padding-left: 5px; display: flex; border-bottom: 1px solid #484848; }
.page { width: 1860px; height: 928px; flex: none; overflow: hidden; position: relative; border-radius: 11px; background: #040606; color: #252627; font: 17.500px/25px "Liberation Sans", Arial, sans-serif; }

/* Search header */
.page-head { height: 181px; padding-top: 33px; border-bottom: 1px solid #0e1010; }
.head-row { height: 57px; padding-left: 34px; display: flex; }
.logo { width: 170px; padding-top: 9px; font: 400 38px/38px Lato, sans-serif; color: #363737; -webkit-text-stroke: .9px #363737; letter-spacing: -.9px; }
.search { width: 864px; padding: 0 24px 0 25px; border-radius: 29px; background: #0a0a0a; border: 1px solid #0c0d0d; display: flex; align-items: center; }
.query { flex: 1; padding-bottom: 2px; font-size: 20px; color: #373838; }
.search-sep { width: 1px; height: 36px; margin: 0 21px 0 22px; background: #151616; }
.search .lens { margin-left: 30px; }
.search .find { margin: 0 0 1px 26px; }
.account { margin-left: auto; padding-right: 35px; display: flex; align-items: center; padding-top: 3px; }
.account svg:nth-child(2) { margin: 0 30px 0 34px; }
.avatar { width: 40px; height: 40px; border-radius: 50%; background: #330b1a; color: #49363e; font-size: 23px; line-height: 42px; text-align: center; -webkit-text-stroke: .5px #49363e; }
.chip-row { height: 49px; margin: 20px 0 0 204px; display: flex; gap: 8px; }
.chip { border: 1px solid #0a0c0c; border-radius: 24px; line-height: 48.500px; text-align: center; color: #2f3031; }
.chip-ookla { width: 82px; } .chip-wifi { width: 72px; } .chip-google { width: 93px; } .chip-internet { width: 96px; } .chip-upload { width: 92px; }
.filters { margin-left: auto; padding: 1px 30px 0 0; display: flex; align-items: center; color: #1c1d1e; }
.caret { margin-left: 12px; border: 5px solid transparent; border-top-color: #1f2021; border-bottom: 0; }
.filter-tools { margin-left: 22px; padding-left: 16px; border-left: 1px solid #101212; letter-spacing: -.2px; }
.safe { margin-left: 112px; }
.safe + .caret { margin-left: 13px; }

/* Results */
.columns { display: flex; align-items: flex-start; }
.results { width: 876px; flex: none; margin-left: 229px; white-space: nowrap; }
.stats { margin-top: 14px; color: #1b1c1d; }
.card { height: 370px; margin-top: 22px; border: 1px solid #0b0d0d; border-radius: 10px; overflow: hidden; }
.card h2 { height: 70px; padding-left: 25px; border-bottom: 1px solid #0b0d0d; font-size: 20px; line-height: 74px; }
.card-body { padding: 18px 20px; }
.card-body p + p { margin-top: 17px; }
.card-body a { color: #161e30; }
.card-body em { display: block; margin-top: 32px; font-size: 15px; font-style: italic; color: #1a1b1c; }
.result { margin-top: 79px; }
.site { height: 50px; display: flex; align-items: center; }
.site-text { margin-left: 15.500px; display: flex; flex-direction: column; }
.site-text span { line-height: 24px; color: #292a2b; }
.site-text small { font-size: 15px; line-height: 24px; color: #202122; }
.more { margin: 26px 0 0 20px; }
.result h3 { font-size: 25px; line-height: 34px; color: #141b2b; }
.result .site + h3 { margin-top: 4px; }
.result p { margin-top: 5px; }
.result .sublinks { margin: 20px 0 0 23.500px; }
.result .sublinks p { margin-top: 1px; }
.sublinks .next { margin-top: 24px; }

/* Assistant answer */
.merlin { margin: 54px 0 0 35px; width: 464px; font-family: Inter, "Open Sans", sans-serif; white-space: nowrap; }
.merlin-card { height: 343px; position: relative; border: 1px solid #0d0e12; border-radius: 10px; background: #020206; }
.merlin h4 { height: 56px; padding-left: 49px; border-bottom: 1px solid #0d0e12; font-size: 21px; font-weight: 600; line-height: 55px; color: #303033; }
.answer { padding-top: 11px; text-align: right; font-size: 18px; line-height: 30px; font-weight: 500; letter-spacing: .4px; }
.a1 { padding-right: 33px; color: #292a2c; } .a2 { padding-right: 47px; color: #1f2023; } .a3 { padding-right: 10px; color: #17181b; } .a4 { padding-right: 82px; color: #101114; } .a5 { padding-right: 39px; color: #08090c; }
.login { width: 247px; height: 45px; margin: 31px 0 0 107px; background: #0b0b26; border-radius: 5px; color: #303038; font-size: 17px; font-weight: 600; line-height: 46px; letter-spacing: -.25px; text-align: center; }
.pill { position: absolute; right: -15px; top: -20px; width: 57px; height: 32px; border: 1px solid #0e0f16; border-radius: 16px; background: #020306; display: flex; align-items: center; justify-content: center; gap: 9px; }
.helpful { height: 46px; padding: 0 12px 0 120px; display: flex; align-items: center; font-size: 17px; letter-spacing: -.28px; color: #1d1e22; }
.helpful svg { margin-left: 17px; fill: none; stroke: #292a2e; stroke-width: 1.4; }
.helpful .down { margin-left: 18px; transform: rotate(180deg); }
.side-tab { position: absolute; right: 0; top: 697px; width: 38px; height: 37px; padding: 5px; border: 1px solid #15161e; border-right: 0; border-radius: 6px 0 0 6px; background: #05060e; }

/* Speed test dialog */
.dialog { position: absolute; left: 680px; top: 89px; width: 500px; height: 750px; background: #202124; color: #bdc1c6; display: flex; flex-direction: column; box-shadow: 0 0 3px #000; }
.dialog-head { height: 70px; padding: 0 25px 2px 20px; background: #3c4043; border-bottom: 1px solid #2a2d2f; display: flex; justify-content: space-between; align-items: center; }
.dialog-head h1 { padding-top: 11px; font-size: 22.500px; color: #d3d5d8; }
.meter { height: 425px; display: grid; }
.gauge, .reading { grid-area: 1 / 1; }
.ticks { fill: #a4a9ae; font-size: 17.500px; text-anchor: middle; }
.reading { padding-top: 202px; text-align: center; }
.speed { height: 66px; font-size: 60px; line-height: 66px; color: #c4c7cc; }
.speed small { font-size: 45px; }
.unit { margin-top: 13px; font-size: 15px; color: #aaaeb2; }
.phase { margin-top: 70px; color: #a8acb0; }
.totals { height: 100px; border: solid #3c4043; border-width: 1px 0; display: flex; }
.totals span { flex: 1; padding-top: 59px; font-size: 15px; text-align: center; color: #abafb4; }
.totals span + span { border-left: 1px solid #3c4043; }
.actions { padding: 20px 42px; display: flex; justify-content: flex-end; }
.cancel { width: 117px; height: 45px; border: 1px solid #484a4e; border-radius: 6px; background: #303134; line-height: 40px; text-align: center; color: #b4b7bb; }

/* Edge sidebar */
.sidebar { width: 54px; display: flex; flex-direction: column; align-items: center; }
.apps { padding-top: 1px; }
.apps span { height: 50.200px; display: flex; align-items: center; justify-content: center; }
.apps .amazon { flex-direction: column; color: #000; font: 700 24px/17px "Open Sans", sans-serif; }
.rule { width: 35px; height: 1px; margin-top: 15px; background: #777; }
.add { margin-top: 31px; }
.rule.low { margin-top: 260px; }
.panel { margin-top: 20px; }
.gear { margin-top: 31px; }

/* Taskbar */
.taskbar { height: 59px; flex: none; background: #202020; display: flex; align-items: center; color: #fff; font-size: 15px; line-height: 20px; }
.weather { width: 502px; padding-left: 28px; display: flex; align-items: center; gap: 12.500px; }
.weather div, .lang, .clock { padding-bottom: 4px; }
.sun { width: 24px; height: 24px; border-radius: 50%; background: linear-gradient(135deg, #f6c02c, #f06310); }
.weather b, .weather span { display: block; font-weight: 400; letter-spacing: -.5px; }
.weather span { color: #c8c8c8; letter-spacing: -.3px; }
.task-search { width: 275px; height: 40px; margin-left: 17px; padding: 0 7px 0 14px; border-radius: 20px; background: #3c3c3c; border: 1px solid #4b4b4b; display: flex; align-items: center; }
.task-search span { flex: 1; margin-left: 12px; font-size: 16.500px; color: #dedede; letter-spacing: -.15px; }
.task-apps { margin-left: 5px; display: flex; gap: 6px; }
.task-apps > span { width: 49px; height: 50px; display: flex; align-items: center; justify-content: center; position: relative; border-radius: 5px; }
.active { background: #2d2d2d; box-shadow: inset 0 0 0 1px #363636; }
.active::after, .running::after { content: ""; position: absolute; bottom: 1px; width: 20px; height: 4px; border-radius: 2px; background: #f47e65; }
.running::after { width: 8px; background: #999; }
.pre { position: absolute; left: 17px; top: 30px; width: 23px; height: 10px; border-radius: 3px; background: #ffc61a; color: #221a00; font: 700 9.500px/10px "Open Sans", sans-serif; text-align: center; }
.tray { margin-left: auto; padding-right: 27px; display: flex; align-items: center; }
.cloud { margin-left: 23px; }
.lang { width: 40px; margin: 0 17px 0 18px; text-align: center; letter-spacing: -.1px; }
.mute { margin-left: 10px; }
.batt { margin-left: 11px; }
.clock { width: 97px; text-align: right; letter-spacing: -.05px; }
.bell { margin-left: 11px; }
```
